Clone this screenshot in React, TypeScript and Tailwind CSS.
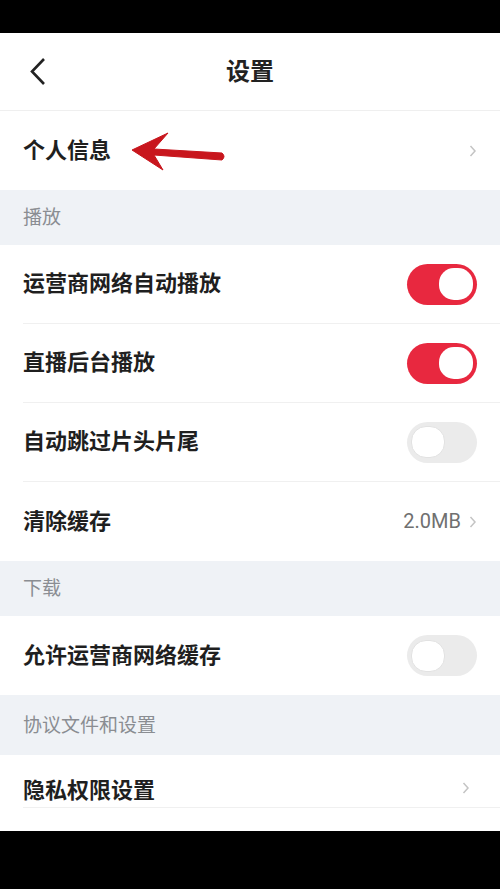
import React from 'react';

type Row =
  | { kind: 'section'; title: string; h: string }
  | { kind: 'toggle'; label: string; on: boolean; divider?: boolean }
  | { kind: 'link'; label: string; value?: string; divider?: boolean };

const rows: Row[] = [
  { kind: 'section', title: '播放', h: 'h-[55px]' },
  { kind: 'toggle', label: '运营商网络自动播放', on: true, divider: true },
  { kind: 'toggle', label: '直播后台播放', on: true, divider: true },
  { kind: 'toggle', label: '自动跳过片头片尾', on: false, divider: true },
  { kind: 'link', label: '清除缓存', value: '2.0MB' },
  { kind: 'section', title: '下载', h: 'h-[55px]' },
  { kind: 'toggle', label: '允许运营商网络缓存', on: false },
  { kind: 'section', title: '协议文件和设置', h: 'h-[60px]' },
];

function Chevron() {
  return (
    <svg width="8" height="14" viewBox="0 0 8 14" className="shrink-0">
      <polyline points="1.5,2 6,7 1.5,12" fill="none" stroke="#c4c4c4" strokeWidth="1.5" />
    </svg>
  );
}

function Toggle({ on }: { on: boolean }) {
  return (
    <div
      className={`w-[70px] h-[41px] rounded-full p-[4px] flex items-center ${
        on ? 'bg-[#e8283f] justify-end' : 'bg-[#ebebeb] justify-start'
      }`}
    >
      <div className={`w-[34px] h-[32px] rounded-[15px] bg-white ${on ? '' : 'border border-[#e2e2e2]'}`} />
    </div>
  );
}

function RedArrow() {
  return (
    <svg
      width="105"
      height="48"
      viewBox="0 0 105 48"
      className="absolute left-[125px] top-[17px] pointer-events-none"
    >
      <path
        d="M7 22 L43 5 L29 21 L97 25 Q101 28.5 97 32 L29 27 L38 42 Z"
        fill="#c8161d"
        stroke="#c8161d"
        strokeWidth="1"
        strokeLinejoin="round"
      />
    </svg>
  );
}

export default function App() {
  return (
    <div className="w-full h-[889px] bg-black flex flex-col font-['Noto_Sans_CJK_SC',sans-serif]">
      <div className="h-[33px] shrink-0 bg-black" />

      <div className="bg-white flex flex-col">
        <header className="relative h-[78px] flex items-center justify-center border-b border-[#efefef]">
          <svg width="20" height="30" viewBox="0 0 20 30" className="absolute left-[28px] top-[24px]">
            <polyline points="16,2 4,14.5 16,27" fill="none" stroke="#222" strokeWidth="2.6" />
          </svg>
          <h1 className="text-[24px] leading-none font-bold text-[#222] mb-[4px]">设置</h1>
        </header>

        <div className="relative h-[79px] px-[23px] flex items-center justify-between">
          <span className="text-[22px] leading-none font-bold text-[#1f1f1f] mb-[6px]">个人信息</span>
          <Chevron />
          <RedArrow />
        </div>

        {rows.map((r, i) => {
          if (r.kind === 'section') {
            return (
              <div key={i} className={`${r.h} bg-[#eff2f6] px-[23px] flex items-center`}>
                <span className="text-[19px] leading-none text-[#8a8d92] mb-[4px]">{r.title}</span>
              </div>
            );
          }
          return (
            <div key={i} className="h-[79px] pl-[23px] flex">
              <div
                className={`flex-1 pr-[23px] flex items-center justify-between ${
                  r.divider ? 'border-b border-[#f0f0f0]' : ''
                }`}
              >
                <span className="text-[22px] leading-none font-bold text-[#1f1f1f] mb-[6px]">{r.label}</span>
                {r.kind === 'toggle' ? (
                  <Toggle on={r.on} />
                ) : (
                  <div className="flex items-center gap-[8px]">
                    <span className="text-[20px] leading-none text-[#707070] font-['Roboto',sans-serif] mb-[2px]">
                      {r.value}
                    </span>
                    <Chevron />
                  </div>
                )}
              </div>
            </div>
          );
        })}

        <div className="h-[53px] pl-[23px] flex">
          <div className="flex-1 pr-[30px] pb-[8px] flex items-end justify-between border-b border-[#f0f0f0]">
            <span className="text-[22px] leading-none font-bold text-[#1f1f1f]">隐私权限设置</span>
            <div className="pb-[4px]">
              <Chevron />
            </div>
          </div>
        </div>
        <div className="h-[23px]" />
      </div>

      <div className="flex-1 bg-black" />
    </div>
  );
}
